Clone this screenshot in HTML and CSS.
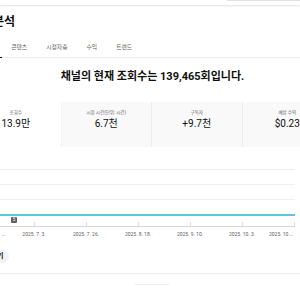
FILE: index.html
```html
<!DOCTYPE html>
<html lang="ko">
<head>
<meta charset="utf-8">
<link rel="stylesheet" href="styles.css">
</head>
<body>
<header class="topbar"><div class="search"></div></header>
<h1 class="title">채널 분석</h1>
<nav class="tabs">
  <span class="tab active">개요</span>
  <span class="tab">콘텐츠</span>
  <span class="tab">시청자층</span>
  <span class="tab">수익</span>
  <span class="tab">트렌드</span>
</nav>
<h2 class="headline">채널의 현재 조회수는 139,465회입니다.</h2>
<div class="cards">
  <div class="card selected"><div class="label">조회수</div><div class="value">13.9만</div></div>
  <div class="card"><div class="label">시청 시간(단위: 시간)</div><div class="value">6.7천</div></div>
  <div class="card"><div class="label">구독자</div><div class="value">+9.7천</div></div>
  <div class="card"><div class="label">예상 수익</div><div class="value">$0.23</div></div>
</div>
<div class="chart">
  <div class="gline"></div>
  <div class="gline"></div>
  <div class="gline"></div>
  <div class="dataline"></div>
  <div class="markers"><span class="badge">5</span></div>
</div>
<div class="xlabels">
  <span class="xl first">…</span>
  <span class="xl">2025. 7. 3.</span>
  <span class="xl">2025. 7. 26.</span>
  <span class="xl">2025. 8. 18.</span>
  <span class="xl">2025. 9. 10.</span>
  <span class="xl">2025. 10. 3.</span>
  <span class="xl last">2025. 10. 26.</span>
</div>
<div class="more-row"><span class="more">더보기</span></div>
<div class="divider"></div>
<div class="stub"></div>
</body>
</html>
```
FILE: styles.css
```css
* { box-sizing: border-box; }
html, body { margin: 0; padding: 0; }
body {
  width: 300px;
  height: 300px;
  overflow: hidden;
  background: #fff;
  color: #0f0f0f;
  font-family: Roboto, "Noto Sans CJK KR", sans-serif;
}
.topbar {
  height: 5px;
  display: flex;
  justify-content: flex-end;
  background: #fff;
  box-shadow: 0 1px 2px rgba(0,0,0,0.12);
}
.search {
  width: 73px;
  height: 1px;
  border-bottom: 1px solid #e2e2e2;
}
.title {
  margin: 10px 0 0 -32px;
  font-size: 12px;
  line-height: 14px;
  font-weight: 700;
  white-space: nowrap;
}
.tabs {
  display: flex;
  height: 20px;
  margin: 9px 0 0 -28px;
  border-bottom: 1px solid #ececec;
  align-items: center;
}
.tab {
  padding: 0 9.5px;
  font-size: 5.8px;
  line-height: 19px;
  color: #606060;
  white-space: nowrap;
}
.tab.active {
  color: #0f0f0f;
  border-bottom: 1px solid #0f0f0f;
}
.headline {
  margin: 11px 0 0;
  padding-left: 5px;
  font-size: 11px;
  line-height: 16px;
  font-weight: 700;
  text-align: center;
  white-space: nowrap;
}
.cards {
  display: flex;
  margin: 17px 0 0 -29px;
  width: 400px;
  height: 45px;
}
.card {
  flex: 0 0 90.5px;
  background: #f9f9f9;
  border-right: 1px solid #ececec;
  text-align: center;
  padding-top: 7px;
}
.card.selected { background: #fff; border-right-color: #f2f2f2; }
.label {
  font-size: 4.5px;
  line-height: 8px;
  color: #606060;
  white-space: nowrap;
}
.value {
  font-size: 10px;
  line-height: 13px;
  color: #0f0f0f;
  white-space: nowrap;
}
.chart {
  margin: 22px 0 0 -30px;
  width: 325px;
}
.gline {
  height: 15px;
  border-top: 1px solid #efefef;
}
.dataline {
  height: 2px;
  background: #62c2e6;
}
.markers {
  height: 11px;
  border-bottom: 1px solid #d4d4d4;
  padding: 1px 0 0 41px;
  background-image: linear-gradient(to right, transparent 0 26px, #e0e0e0 26px 27px, transparent 27px);
  background-size: 52px 4px;
  background-repeat: repeat-x;
  background-position: 38px bottom;
}
.badge {
  display: block;
  width: 6px;
  height: 6px;
  background: #606060;
  color: #fff;
  font-size: 4.5px;
  line-height: 6px;
  text-align: center;
  border-radius: 1px;
}
.xlabels {
  display: flex;
  width: 294px;
  margin-top: 4px;
  font-size: 5px;
  line-height: 6px;
  color: #606060;
  white-space: nowrap;
}
.xl {
  flex: 0 0 52px;
  text-align: center;
  overflow: hidden;
}
.xl.first { flex: 0 0 8px; text-align: right; padding-right: 3px; }
.xl.last { flex: 1 1 auto; text-align: left; text-overflow: ellipsis; padding-left: 1px; }
.more-row {
  display: flex;
  margin: 13px 0 0 -22px;
}
.more {
  display: block;
  height: 13px;
  padding: 0 6px;
  border-radius: 7px;
  background: #f2f2f2;
  color: #0f0f0f;
  font-size: 7px;
  font-weight: 700;
  line-height: 13px;
  white-space: nowrap;
}
.divider {
  margin-top: 10px;
  border-top: 1px solid #ececec;
}
.stub {
  margin: 10px 0 0 135px;
  width: 34px;
  border-top: 1px solid #ececec;
}
```
